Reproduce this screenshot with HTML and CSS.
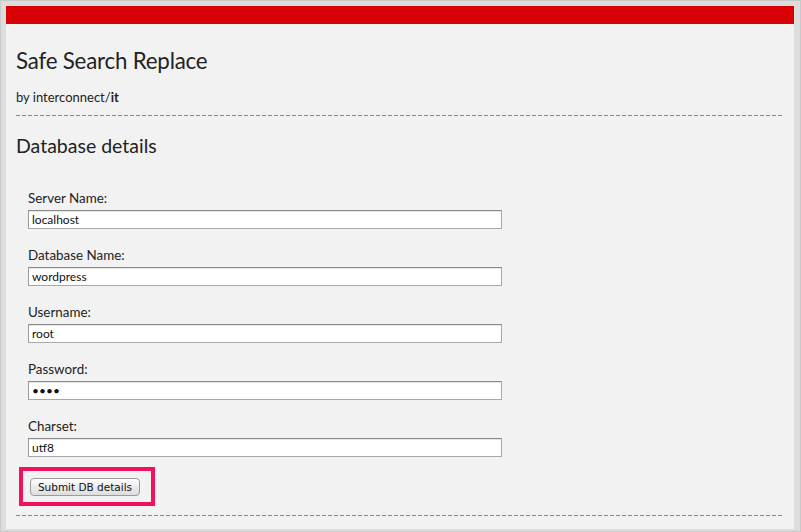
FILE: index.html
```html
<!DOCTYPE html>
<html>
<head>
<meta charset="utf-8">
<title>Safe Search Replace</title>
<link rel="stylesheet" href="styles.css">
</head>
<body>
<div class="wrap">
  <div class="topbar"></div>
  <div class="content">
    <h1 class="title">Safe Search Replace</h1>
    <p class="byline">by interconnect/<b>it</b></p>
    <div class="rule"></div>
    <h2 class="section">Database details</h2>
    <form class="dbform">
      <div class="field">
        <label class="lbl">Server Name:</label>
        <input class="txt" type="text" value="localhost">
      </div>
      <div class="field">
        <label class="lbl">Database Name:</label>
        <input class="txt" type="text" value="wordpress">
      </div>
      <div class="field">
        <label class="lbl">Username:</label>
        <input class="txt" type="text" value="root">
      </div>
      <div class="field">
        <label class="lbl">Password:</label>
        <input class="txt" type="password" value="root">
      </div>
      <div class="field">
        <label class="lbl">Charset:</label>
        <input class="txt" type="text" value="utf8">
      </div>
      <div class="highlight">
        <button class="btn" type="button">Submit DB details</button>
      </div>
    </form>
    <div class="rule rule-bottom"></div>
  </div>
</div>
</body>
</html>
```
FILE: styles.css
```css
html, body {
  margin: 0;
  padding: 0;
}
body {
  width: 801px;
  height: 532px;
  box-sizing: border-box;
  border: 1px solid #c9c9c9;
  background: #dddddd;
  padding: 5px 6px 2px 5px;
  overflow: hidden;
  font-family: "Lato", "Open Sans", sans-serif;
  color: #222;
}
.wrap {
  height: 100%;
  background: #f2f2f2;
  overflow: hidden;
}
.topbar {
  height: 18px;
  background: #d60005;
}
.content {
  padding: 0 10px 0 10px;
}
.title {
  margin: 0;
  padding-top: 23px;
  font-size: 22.3px;
  font-weight: 400;
  line-height: 28px;
  letter-spacing: -0.2px;
  color: #222;
}
.byline {
  margin: 0;
  padding-top: 14px;
  font-size: 13px;
  line-height: 16px;
  color: #222;
}
.byline b {
  font-weight: 700;
}
.rule {
  height: 1px;
  margin-top: 10px;
  background: repeating-linear-gradient(to right, #888 0, #888 4px, transparent 4px, transparent 6px);
}
.section {
  margin: 0;
  padding-top: 17px;
  font-size: 19.5px;
  font-weight: 400;
  line-height: 26px;
  color: #222;
}
.dbform {
  padding: 32px 0 0 12px;
  display: flex;
  flex-direction: column;
  gap: 19px;
}
.field {
  display: flex;
  flex-direction: column;
  gap: 4px;
}
.lbl {
  font-size: 13.4px;
  line-height: 15px;
  color: #222;
}
.txt {
  width: 474px;
  height: 19px;
  box-sizing: border-box;
  margin: 0;
  padding: 0 3px;
  border: 1px solid #a8a8a8;
  border-top-color: #8a8a8a;
  border-left-color: #999;
  background: #fff;
  font-family: "Lato", "Open Sans", sans-serif;
  font-size: 12px;
  color: #111;
  outline: none;
  box-shadow: inset 0 1px 0 #e6e6e6;
}
.highlight {
  align-self: flex-start;
  margin: -9px 0 0 -9px;
  border: 4px solid #f3115a;
  padding: 7px 11px 6px 7px;
}
.btn {
  display: block;
  height: 18px;
  width: 110px;
  margin: 0;
  padding: 0;
  border: 1px solid #9a9a9a;
  border-radius: 4px;
  background: linear-gradient(#ffffff, #ececec 50%, #dedede);
  font-family: "DejaVu Sans", "Liberation Sans", sans-serif;
  font-size: 10.5px;
  color: #111;
  line-height: 16px;
}
.rule-bottom {
  margin-top: 9px;
}
```
